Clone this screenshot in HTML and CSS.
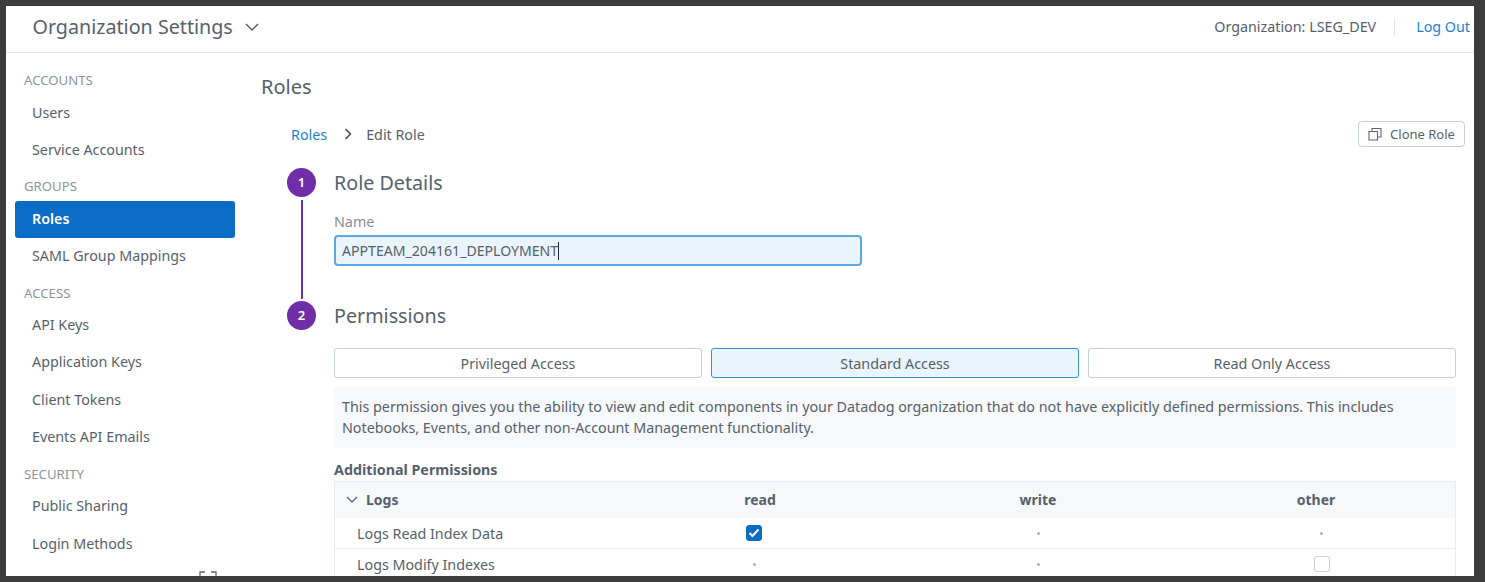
FILE: index.html
```html
<!DOCTYPE html>
<html lang="en">
<head>
    <meta charset="UTF-8">
    <title>Organization Settings</title>
    <link rel="stylesheet" href="styles.css">
</head>
<body>
    <div class="window">
        <div class="topbar">
            <div class="org-title">Organization Settings
                <svg class="org-chevron" width="14" height="8" viewBox="0 0 14 8"><path d="M1 1l6 6 6-6" fill="none" stroke="#4f5a65" stroke-width="1.4"/></svg>
            </div>
            <div class="topbar-right">
                <span class="org-name">Organization: LSEG_DEV</span>
                <span class="topbar-sep"></span>
                <a class="logout">Log Out</a>
            </div>
        </div>
        <div class="body-row">
            <div class="sidebar">
                <div class="side-label first">ACCOUNTS</div>
                <div class="side-item">Users</div>
                <div class="side-item">Service Accounts</div>
                <div class="side-label">GROUPS</div>
                <div class="side-item active">Roles</div>
                <div class="side-item">SAML Group Mappings</div>
                <div class="side-label">ACCESS</div>
                <div class="side-item">API Keys</div>
                <div class="side-item">Application Keys</div>
                <div class="side-item">Client Tokens</div>
                <div class="side-item">Events API Emails</div>
                <div class="side-label">SECURITY</div>
                <div class="side-item">Public Sharing</div>
                <div class="side-item">Login Methods</div>
                <svg class="side-expand" width="18" height="12" viewBox="0 0 18 12"><path d="M1 5V1h5M12 1h5v4" fill="none" stroke="#5d6873" stroke-width="1.3"/></svg>
            </div>
            <div class="main">
                <div class="page-title">Roles</div>
                <div class="crumb-row">
                    <a class="crumb-link">Roles</a>
                    <svg class="crumb-sep" width="8" height="12" viewBox="0 0 8 12"><path d="M1.5 1l5 5-5 5" fill="none" stroke="#3d4650" stroke-width="1.5"/></svg>
                    <span class="crumb-current">Edit Role</span>
                    <button class="clone-btn">
                        <svg width="14" height="14" viewBox="0 0 14 14"><path d="M1 4.500h8.500V13H1zM4 4.500V1.500h9v8.500h-3.500" fill="none" stroke="#5d6873" stroke-width="1.1"/></svg>
                        Clone Role
                    </button>
                </div>

                <div class="step step-one">
                    <div class="step-mark">
                        <div class="step-num">1</div>
                        <div class="step-line"></div>
                    </div>
                    <div class="step-body">
                        <div class="step-title">Role Details</div>
                        <div class="field-label">Name</div>
                        <div class="name-input">APPTEAM_204161_DEPLOYMENT<span class="caret"></span></div>
                    </div>
                </div>

                <div class="step">
                    <div class="step-mark">
                        <div class="step-num">2</div>
                    </div>
                    <div class="step-body">
                        <div class="step-title">Permissions</div>
                        <div class="access-tabs">
                            <button class="access-tab">Privileged Access</button>
                            <button class="access-tab selected">Standard Access</button>
                            <button class="access-tab">Read Only Access</button>
                        </div>
                        <div class="access-desc">This permission gives you the ability to view and edit components in your Datadog organization that do not have explicitly defined permissions. This includes Notebooks, Events, and other non-Account Management functionality.</div>
                        <div class="perm-heading">Additional Permissions</div>
                        <div class="perm-table">
                            <div class="perm-head">
                                <div class="perm-group">
                                    <svg width="12" height="7" viewBox="0 0 12 7"><path d="M1 1l5 5 5-5" fill="none" stroke="#4f5a65" stroke-width="1.2"/></svg>
                                    Logs
                                </div>
                                <div class="head-cell">read</div>
                                <div class="head-cell">write</div>
                                <div class="head-cell">other</div>
                            </div>
                            <div class="perm-row">
                                <div class="perm-name">Logs Read Index Data</div>
                                <div class="perm-cell">
                                    <span class="check on"><svg width="12" height="10" viewBox="0 0 12 10"><path d="M1.500 5l3 3 6-6.500" fill="none" stroke="#fff" stroke-width="2"/></svg></span>
                                </div>
                                <div class="perm-cell"><span class="dot"></span></div>
                                <div class="perm-cell last"><span class="dot"></span></div>
                            </div>
                            <div class="perm-row">
                                <div class="perm-name">Logs Modify Indexes</div>
                                <div class="perm-cell"><span class="dot"></span></div>
                                <div class="perm-cell"><span class="dot"></span></div>
                                <div class="perm-cell last"><span class="check"></span></div>
                            </div>
                        </div>
                    </div>
                </div>
            </div>
        </div>
    </div>
</body>
</html>
```

FILE: styles.css
```css
html, body {
    margin: 0;
    padding: 0;
    height: 100%;
    overflow: hidden;
}

body {
    background-color: #3c3c3c;
    font-family: "Noto Sans", "Open Sans", sans-serif;
    font-size: 14.3px;
    color: #56616c;
}

button {
    font-family: inherit;
    font-size: 14.3px;
    color: #56616c;
    background-color: #fff;
    cursor: pointer;
}

.window {
    margin: 6px 11px 0 6px;
    height: 570px;
    background-color: #fff;
    overflow: hidden;
    display: flex;
    flex-direction: column;
}

/* top bar */
.topbar {
    height: 47px;
    box-sizing: border-box;
    flex: none;
    display: flex;
    align-items: center;
    justify-content: space-between;
    border-bottom: 1px solid #e2e6f0;
    padding: 0 4px 5px 26.500px;
}

.org-title {
    font-size: 19.7px;
    display: flex;
    align-items: center;
}

.org-chevron {
    margin-left: 12px;
    margin-top: 1px;
}

.topbar-right {
    display: flex;
    align-items: center;
}

.topbar-sep {
    width: 1px;
    height: 18px;
    background-color: #e2e6f0;
    margin: 0 21px 0 18px;
}

.logout {
    color: #1f7fcf;
}

.body-row {
    flex: 1;
    display: flex;
    min-height: 0;
}

/* left nav */
.sidebar {
    width: 220px;
    flex: none;
    padding: 0 0 0 9px;
}

.side-label {
    height: 31.500px;
    line-height: 35px;
    padding-left: 9px;
    font-size: 13.2px;
    color: #8d959d;
}

.side-label.first {
    margin-top: 10px;
}

.side-item {
    height: 37.400px;
    line-height: 36.500px;
    padding-left: 17px;
    box-sizing: border-box;
    border-radius: 3px;
}

.side-item.active {
    background-color: #0a6cc4;
    color: #fff;
    font-weight: 600;
}

.side-expand {
    display: block;
    margin: 8.500px 0 0 184px;
}

/* main content */
.main {
    flex: 1;
    min-width: 0;
    padding: 20px 9px 0 26px;
}

.page-title {
    font-size: 20px;
    line-height: 28px;
}

.crumb-row {
    display: flex;
    align-items: center;
    height: 26px;
    margin: 20px 0 0 30px;
}

.crumb-link {
    color: #1f7fcf;
}

.crumb-sep {
    margin: 0 14px 0 17px;
}

.clone-btn {
    margin-left: auto;
    width: 107px;
    height: 26px;
    padding: 0;
    border: 1px solid #c7ccd8;
    border-radius: 4px;
    display: flex;
    align-items: center;
    justify-content: center;
    gap: 8px;
    font-size: 13px;
}

.step {
    display: flex;
    margin-left: 26px;
}

.step-one {
    height: 133px;
    margin-top: 21px;
}

.step-mark {
    width: 29px;
    margin-right: 18px;
    flex: none;
    display: flex;
    flex-direction: column;
    align-items: center;
}

.step-num {
    width: 29px;
    height: 29px;
    flex: none;
    border-radius: 50%;
    background-color: #6f2da8;
    color: #fff;
    font-size: 13px;
    font-weight: 600;
    line-height: 29px;
    text-align: center;
}

.step-line {
    width: 2px;
    height: 99px;
    margin-top: 3px;
    background-color: #6f2da8;
}

.step-body {
    flex: 1;
    min-width: 0;
}

.step-title {
    font-size: 19.7px;
    line-height: 29px;
}

.field-label {
    margin-top: 15px;
    line-height: 20px;
    color: #858e97;
}

.name-input {
    width: 528px;
    height: 31px;
    margin-top: 3px;
    box-sizing: border-box;
    border: 2px solid #5ba8e2;
    border-radius: 4px;
    background-color: #e9f4fb;
    padding-left: 6px;
    font-size: 14.1px;
    display: flex;
    align-items: center;
}

.caret {
    width: 1px;
    height: 18px;
    background-color: #222;
}

.access-tabs {
    display: flex;
    gap: 9px;
    margin-top: 18px;
    margin-right: 9px;
}

.access-tab {
    flex: 1;
    height: 30px;
    padding: 0;
    border: 1px solid #c7ccd8;
    border-radius: 3px;
}

.access-tab.selected {
    background-color: #e9f4fb;
    border-color: #3f8fd0;
}

.access-desc {
    margin: 9px 9px 0 0;
    height: 61px;
    box-sizing: border-box;
    padding: 9px 8px;
    background-color: #f7f8fa;
    line-height: 21px;
}

.perm-heading {
    margin-top: 12px;
    font-weight: 700;
    line-height: 20px;
}

.perm-table {
    margin: 1px 9px 0 0;
    border: 1px solid #e8ebf3;
}

.perm-head {
    display: grid;
    grid-template-columns: 1fr 278px 278px 278px;
    height: 36px;
    box-sizing: border-box;
    padding-bottom: 2px;
    align-items: center;
    background-color: #f7f8fa;
    font-size: 14px;
    font-weight: 700;
}

.perm-group {
    display: flex;
    align-items: center;
    gap: 8px;
    padding-left: 11px;
}

.head-cell {
    text-align: center;
}

.perm-row {
    display: grid;
    grid-template-columns: 1fr 284px 284px 275px;
    height: 30px;
    align-items: center;
    border-bottom: 1px solid #e8ebf3;
}

.perm-name {
    padding-left: 22px;
}

.perm-cell {
    display: flex;
    align-items: center;
    justify-content: center;
}

.perm-cell.last {
    padding-left: 8px;
}

.dot {
    width: 3px;
    height: 3px;
    border-radius: 50%;
    background-color: #a8aeb8;
}

.check {
    width: 16px;
    height: 16px;
    box-sizing: border-box;
    border: 1px solid #c7ccd8;
    border-radius: 3px;
    background-color: #fff;
    display: flex;
    align-items: center;
    justify-content: center;
}

.check.on {
    background-color: #0a6cc4;
    border-color: #0a6cc4;
}
```
